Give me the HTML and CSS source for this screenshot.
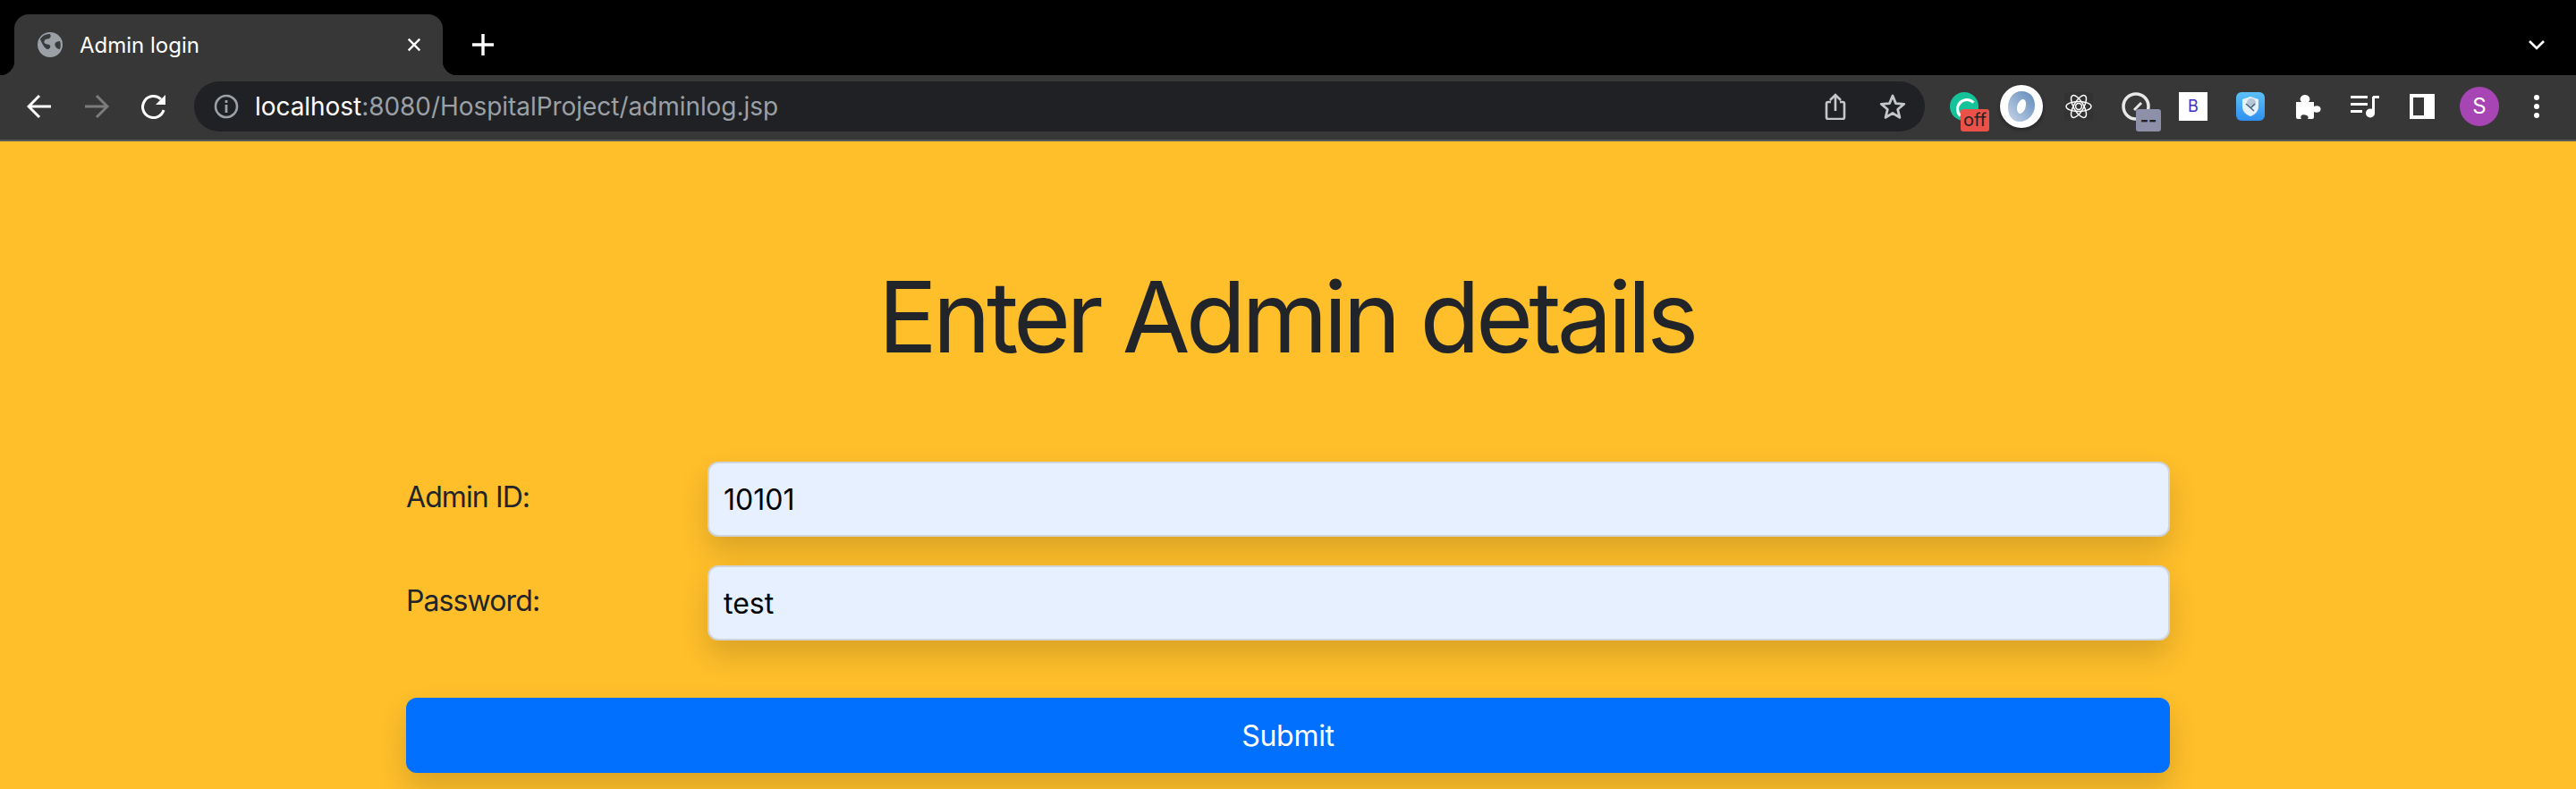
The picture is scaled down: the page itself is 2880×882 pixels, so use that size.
FILE: index.html
```html
<!DOCTYPE html>
<html lang="en">
<head>
    <meta charset="UTF-8">
    <title>Admin login</title>
    <link rel="stylesheet" href="styles.css">
</head>
<body>
    <div class="tabstrip">
        <div class="tab">
            <svg class="globe" viewBox="0 0 28 28"><circle cx="14" cy="14" r="14" fill="#9aa0a6"/><path d="M3 8c2-4 6-6 11-6 1 2 1 4-1 5s-4 0-5 2-1 3 1 4 4 0 5 2-1 4-3 4-5-4-8-11zM25 10c1 3 1 6 0 9-2 0-4-1-5-3s-1-4 1-5 3-1 4-1z" fill="#393a3c"/></svg>
            <span class="tab-title">Admin login</span>
            <svg class="tab-close" viewBox="0 0 20 20"><path d="M3 3l14 14M17 3L3 17" stroke="#fff" stroke-width="2.6"/></svg>
        </div>
        <svg class="new-tab" viewBox="0 0 24 24"><path d="M12 0v24M0 12h24" stroke="#fff" stroke-width="3.4"/></svg>
        <svg class="tab-menu" viewBox="0 0 20 12"><path d="M2 2l8 8 8-8" fill="none" stroke="#fff" stroke-width="2.6"/></svg>
    </div>

    <div class="toolbar">
        <div class="slot"><svg class="nav-icon" viewBox="0 0 28 28"><path d="M27 14H3M14 2L2 14l12 12" fill="none" stroke="#fff" stroke-width="3"/></svg></div>
        <div class="slot"><svg class="nav-icon" viewBox="0 0 28 28"><path d="M1 14h24M14 2l12 12-12 12" fill="none" stroke="#7b7c7d" stroke-width="3"/></svg></div>
        <div class="slot"><svg class="nav-icon" viewBox="0 0 28 28"><path d="M25 18a12 12 0 1 1-3-12" fill="none" stroke="#fff" stroke-width="3"/><path d="M27 1v11H16z" fill="#fff"/></svg></div>

        <div class="omnibox">
            <svg class="info" viewBox="0 0 28 28"><circle cx="14" cy="14" r="12" fill="none" stroke="#9aa0a6" stroke-width="2.6"/><path d="M14 12v9M14 7v3" stroke="#9aa0a6" stroke-width="2.8"/></svg>
            <span class="url"><span class="host">localhost</span>:8080/HospitalProject/adminlog.jsp</span>
            <svg class="omni-icon" viewBox="0 0 24 30"><path d="M7 10H4a2 2 0 0 0-2 2v15a2 2 0 0 0 2 2h16a2 2 0 0 0 2-2V12a2 2 0 0 0-2-2h-3M12 20V2M6 8l6-6 6 6" fill="none" stroke="#c4c7c9" stroke-width="2.6"/></svg>
            <svg class="omni-icon star" viewBox="0 0 30 30"><path d="M15 3l3.500 8.600 9.300.7-7.100 6 2.200 9.100L15 22.500l-7.900 4.900 2.200-9.100-7.100-6 9.300-.7z" fill="none" stroke="#c4c7c9" stroke-width="2.800" stroke-linejoin="round"/></svg>
        </div>

        <div class="slot">
            <div class="grammarly"></div>
            <span class="badge badge-off">off</span>
        </div>
        <div class="slot"><div class="json-ring"><svg viewBox="0 0 48 48"><defs><linearGradient id="ringblue" x1="0" y1="1" x2="1" y2="0"><stop offset="0" stop-color="#c5d4e6"/><stop offset="1" stop-color="#5f89ba"/></linearGradient></defs><path fill-rule="evenodd" d="M24 7c11 0 15 8 15 16 0 10-8 18-17 18-9 0-13-8-13-16C9 15 15 7 24 7zM25 16c-4 2-6 6-6 10 0 4 2 6 4 6 4-2 6-6 6-11 0-3-1-5-4-5z" fill="url(#ringblue)"/></svg></div></div>
        <div class="slot"><div class="react-box"><svg viewBox="0 0 32 32"><circle cx="16" cy="16" r="3.400" fill="none" stroke="#fff" stroke-width="1.500"/><g fill="none" stroke="#fff" stroke-width="1.500"><ellipse cx="16" cy="16" rx="14" ry="5.500"/><ellipse cx="16" cy="16" rx="14" ry="5.500" transform="rotate(60 16 16)"/><ellipse cx="16" cy="16" rx="14" ry="5.500" transform="rotate(120 16 16)"/></g></svg></div></div>
        <div class="slot">
            <svg class="gauge" viewBox="0 0 32 32"><circle cx="16" cy="16" r="14" fill="#393939" stroke="#e8e8e8" stroke-width="3.500"/><path d="M14 20l8-8" stroke="#e8e8e8" stroke-width="3"/></svg>
            <span class="badge badge-grey">--</span>
        </div>
        <div class="slot"><div class="bs-box">B</div></div>
        <div class="slot"><div class="shield-box"><svg viewBox="0 0 32 32"><path d="M16 5l9 3v8c0 6-4 9-9 11-5-2-9-5-9-11V8z" fill="#e4f1fb"/><circle cx="17" cy="12" r="5" fill="#b5c7d6"/><path d="M11 13l9 8M21 13l-5 5" stroke="#4a6580" stroke-width="1.500"/></svg></div></div>
        <div class="slot"><svg class="puzzle" viewBox="0 0 30 28"><path d="M2 9h6c-1-1-2-3-1-5s3-3 5-3 4 1 5 3 0 4-1 5h6v5c2-1 4-1 6 0s2 5 0 6-4 1-6 0v6a2 2 0 0 1-2 2h-5c1-1 1-3-1-4s-5-1-6 0-1 3 0 4H4a2 2 0 0 1-2-2z" fill="#fff"/></svg></div>
        <div class="slot"><svg class="music" viewBox="0 0 32 26"><path d="M0 2.500h19M0 10.500h19M0 18.500h13" stroke="#fff" stroke-width="3"/><path d="M25.500 2v18" stroke="#fff" stroke-width="3"/><path d="M25 1h7v3h-7z" fill="#fff"/><circle cx="22" cy="20.500" r="5" fill="#fff"/></svg></div>
        <div class="slot"><div class="sidebar-icon"></div></div>
        <div class="slot"><div class="avatar">S</div></div>
        <div class="slot"><div class="dots"><i></i><i></i><i></i></div></div>
    </div>

    <div class="page">
        <h1 class="title">Enter Admin details</h1>
        <form class="login-form">
            <div class="form-row">
                <label class="form-label" for="adminid">Admin ID:</label>
                <input class="form-input" id="adminid" type="text" value="10101">
            </div>
            <div class="form-row">
                <label class="form-label" for="password">Password:</label>
                <input class="form-input" id="password" type="text" value="test">
            </div>
            <button class="submit-btn" type="button">Submit</button>
        </form>
    </div>
</body>
</html>
```

FILE: styles.css
```css
* {
    box-sizing: border-box;
}
html, body {
    margin: 0;
    height: 100%;
    overflow: hidden;
}
body {
    font-family: Inter, "Liberation Sans", sans-serif;
    background-color: #ffbf2b;
    color: #212529;
}

/* tab strip */
.tabstrip {
    height: 84px;
    background-color: #000;
    display: flex;
    align-items: flex-end;
    padding-left: 16px;
    padding-right: 30px;
}
.tab {
    position: relative;
    width: 479px;
    height: 68px;
    background-color: #373737;
    border-radius: 16px 16px 0 0;
    display: flex;
    align-items: center;
    padding: 0 24px;
}
.tab::before,
.tab::after {
    content: "";
    position: absolute;
    bottom: 0;
    width: 16px;
    height: 16px;
}
.tab::before {
    left: -16px;
    background: radial-gradient(circle at 0 0, #000 16px, #373737 16.5px);
}
.tab::after {
    right: -16px;
    background: radial-gradient(circle at 100% 0, #000 16px, #373737 16.5px);
}
.globe {
    width: 28px;
    height: 28px;
    margin-left: 2px;
}
.tab-title {
    margin-left: 19px;
    color: #fff;
    font-size: 24px;
    flex: 1;
}
.tab-close {
    width: 18px;
    height: 18px;
    margin-right: -1px;
}
.new-tab {
    width: 24px;
    height: 24px;
    margin: 0 0 22px 33px;
}
.tab-menu {
    width: 20px;
    height: 12px;
    margin: 0 4px 28px auto;
}

/* toolbar */
.toolbar {
    height: 74px;
    background-color: #373737;
    border-bottom: 2px solid #5a5a5a;
    display: flex;
    align-items: center;
    padding: 0 12px 2px 12px;
}
.slot {
    position: relative;
    width: 64px;
    height: 56px;
    flex: none;
    display: flex;
    align-items: center;
    justify-content: center;
}
.nav-icon {
    width: 28px;
    height: 28px;
}
.omnibox {
    flex: 1;
    height: 56px;
    margin: 0 12px 0 13px;
    background-color: #202124;
    border-radius: 28px;
    display: flex;
    align-items: center;
    padding: 0 21px 0 22px;
}
.info {
    width: 28px;
    height: 28px;
    flex: none;
}
.url {
    margin-left: 18px;
    flex: 1;
    color: #9aa0a6;
    font-size: 28px;
    letter-spacing: -0.05px;
}
.host {
    color: #fff;
}
.omni-icon {
    width: 24px;
    height: 30px;
    flex: none;
}
.star {
    width: 30px;
    height: 30px;
    margin-left: 37px;
}

/* extension icons */
.grammarly {
    width: 32px;
    height: 32px;
    border-radius: 50%;
    background-color: #15c39a;
    position: relative;
}
.grammarly::after {
    content: "";
    position: absolute;
    left: 7px;
    top: 7px;
    width: 18px;
    height: 18px;
    border: 3px solid #fff;
    border-right-color: transparent;
    border-bottom-color: transparent;
    border-radius: 50%;
}
.badge {
    position: absolute;
    bottom: 0;
    height: 25px;
    border-radius: 3px;
    color: #222;
    font-size: 20px;
    line-height: 24px;
    text-align: center;
}
.badge-off {
    left: 28px;
    width: 32px;
    background-color: #ea5149;
}
.badge-grey {
    left: 32px;
    width: 28px;
    background-color: #8e8fa8;
    font-weight: 700;
}
.json-ring {
    width: 48px;
    height: 48px;
    border-radius: 50%;
    background-color: #fff;
    box-shadow: 0 2px 4px rgba(0,0,0,0.4);
}
.json-ring svg,
.react-box svg,
.shield-box svg {
    display: block;
    width: 100%;
    height: 100%;
}
.react-box {
    width: 32px;
    height: 32px;
    background-color: #333;
    border-radius: 2px;
}
.gauge {
    width: 32px;
    height: 32px;
}
.bs-box {
    width: 32px;
    height: 32px;
    background-color: #fff;
    color: #3b30c4;
    font-size: 18px;
    line-height: 32px;
    text-align: center;
}
.shield-box {
    width: 32px;
    height: 32px;
    border-radius: 6px;
    background: linear-gradient(#5cc1f7, #2f8ff0);
}
.puzzle {
    width: 30px;
    height: 28px;
}
.music {
    width: 32px;
    height: 26px;
}
.sidebar-icon {
    width: 28px;
    height: 28px;
    border: 4px solid #fff;
    border-right-width: 12px;
}
.avatar {
    width: 44px;
    height: 44px;
    border-radius: 50%;
    background-color: #a845b5;
    color: #fff;
    font-size: 24px;
    line-height: 44px;
    text-align: center;
}
.dots {
    display: flex;
    flex-direction: column;
    gap: 4px;
}
.dots i {
    width: 6px;
    height: 6px;
    border-radius: 50%;
    background-color: #fff;
}

/* page */
.page {
    width: 1972px;
    margin: 0 auto;
}
.title {
    margin: 0;
    padding: 129px 4px 0 0;
    font-size: 110px;
    font-weight: 400;
    letter-spacing: -4.9px;
    line-height: 134px;
    text-align: center;
}
.login-form {
    margin-top: 95px;
}
.form-row {
    display: flex;
    align-items: flex-start;
    margin-bottom: 32px;
}
.form-label {
    width: 337px;
    flex: none;
    font-size: 32px;
    letter-spacing: -0.9px;
    line-height: 48px;
    padding-top: 16px;
}
.form-input {
    flex: 1;
    height: 84px;
    padding: 0 16px;
    border: 2px solid #ced4da;
    border-radius: 12px;
    background-color: #e7f0fe;
    color: #000;
    font-family: inherit;
    font-size: 32px;
    box-shadow: 0 16px 32px rgba(0,0,0,0.15);
}
.submit-btn {
    display: block;
    width: 100%;
    height: 84px;
    margin-top: 64px;
    border: none;
    border-radius: 12px;
    background-color: #0170fe;
    color: #fff;
    font-family: inherit;
    font-size: 32px;
    letter-spacing: -0.3px;
    box-shadow: 0 16px 32px rgba(0,0,0,0.15);
}
```
